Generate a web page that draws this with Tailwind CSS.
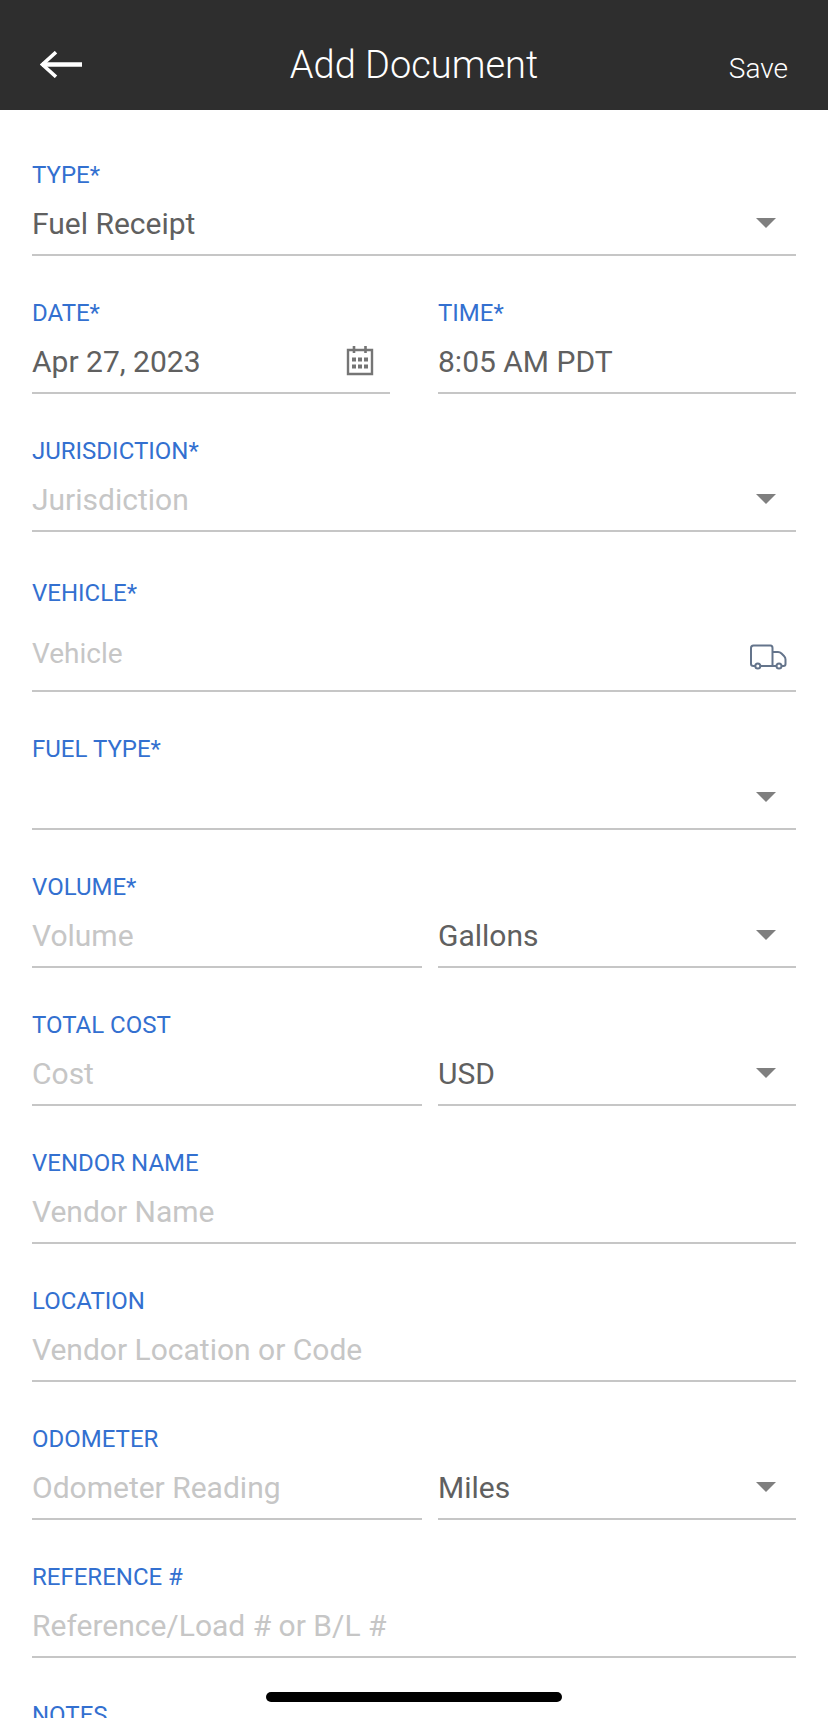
<!DOCTYPE html>
<html lang="en">
<head>
    <meta charset="utf-8">
    <meta name="viewport" content="width=device-width, initial-scale=1.0">
    <title>Add Document</title>
    <script src="https://cdn.jsdelivr.net/npm/@tailwindcss/browser@4"></script>
</head>
<body class="h-screen flex flex-col overflow-hidden bg-white font-['Roboto',sans-serif] text-[30px] text-[#606060]">
    <header class="grid grid-cols-[1fr_auto_1fr] items-baseline px-10 pt-[45px] pb-[21px] bg-[#2e2e2e] text-white font-light">
        <button type="button" aria-label="Back" class="justify-self-start">
            <svg class="block w-[42px] h-[27px]" viewBox="0 0 42 27" fill="none" stroke="currentColor">
                <path d="M2 13.5H42" stroke-width="4.4" />
                <path d="M16 1.2L2.4 13.5L16 25.8" stroke-width="3.6" />
            </svg>
        </button>
        <h1 class="text-[38px] leading-10">Add Document</h1>
        <button type="submit" form="document-form" class="justify-self-end text-[28px] leading-10">Save</button>
    </header>

    <main class="flex-1 min-h-0 overflow-y-auto [scrollbar-width:none]">
        <form id="document-form" class="flex flex-col gap-[42px] px-8 pt-[50px] pb-24">
            <div class="flex flex-col gap-0.5">
                <label for="type" class="text-2xl leading-[30px] text-[#3370d0]">TYPE*</label>
                <div class="relative flex items-center h-16 border-b-2 border-[#c6c6c6]">
                    <select id="type" class="w-full h-full appearance-none bg-transparent outline-none">
                        <option>Fuel Receipt</option>
                    </select>
                    <svg class="absolute right-5 w-5 h-2.5 pointer-events-none" viewBox="0 0 20 10" fill="#7f7f7f"><path d="M0 0H20L10 10Z" /></svg>
                </div>
            </div>

            <div class="grid grid-cols-2 gap-12">
                <div class="flex flex-col gap-0.5">
                    <label for="date" class="text-2xl leading-[30px] text-[#3370d0]">DATE*</label>
                    <div class="flex items-center h-16 pr-4 border-b-2 border-[#c6c6c6]">
                        <input id="date" type="text" value="Apr 27, 2023" class="flex-1 min-w-0 h-full outline-none">
                        <button type="button" aria-label="Pick a date">
                            <svg class="block w-7 h-[30px]" viewBox="0 0 28 30" fill="none" stroke="#757575">
                                <path d="M2 4H26V28H2Z" stroke-width="2.4" />
                                <path d="M8 0V7M19.5 0V7" stroke-width="2.6" />
                                <path d="M6 13.500H22M6 20.500H22" stroke-width="4" stroke-dasharray="4 2" />
                            </svg>
                        </button>
                    </div>
                </div>
                <div class="flex flex-col gap-0.5">
                    <label for="time" class="text-2xl leading-[30px] text-[#3370d0]">TIME*</label>
                    <div class="flex items-center h-16 border-b-2 border-[#c6c6c6]">
                        <input id="time" type="text" value="8:05 AM PDT" class="w-full h-full outline-none">
                    </div>
                </div>
            </div>

            <div class="flex flex-col gap-0.5">
                <label for="jurisdiction" class="text-2xl leading-[30px] text-[#3370d0]">JURISDICTION*</label>
                <div class="relative flex items-center h-16 border-b-2 border-[#c6c6c6]">
                    <select id="jurisdiction" class="w-full h-full appearance-none bg-transparent text-[#c6c6c6] outline-none">
                        <option value="">Jurisdiction</option>
                    </select>
                    <svg class="absolute right-5 w-5 h-2.5 pointer-events-none" viewBox="0 0 20 10" fill="#7f7f7f"><path d="M0 0H20L10 10Z" /></svg>
                </div>
            </div>

            <div class="flex flex-col gap-2 pt-1">
                <label for="vehicle" class="text-2xl leading-[30px] text-[#3370d0]">VEHICLE*</label>
                <div class="flex items-center h-[76px] pr-2 border-b-2 border-[#c6c6c6]">
                    <input id="vehicle" type="text" placeholder="Vehicle" class="flex-1 min-w-0 h-full text-[28px] placeholder:text-[#c6c6c6] outline-none">
                    <button type="button" aria-label="Choose a vehicle" class="pt-2">
                        <svg class="block w-[38px] h-[26px]" viewBox="0 0 38 26" fill="none" stroke="#64748b" stroke-width="2">
                            <path d="M5 22H3.5Q1 22 1 20V4Q1 1.500 3.500 1.500H20.500Q22.500 1.500 22.500 4V22H10.500M22.500 8H28Q30 8 31.500 9.500L34 12Q35.500 13.500 35.500 15.500V20Q35.500 22 33.500 22H31.500M26.500 22H22.500" />
                            <circle cx="7.800" cy="22" r="2.500" />
                            <circle cx="29" cy="22" r="2.500" />
                        </svg>
                    </button>
                </div>
            </div>

            <div class="flex flex-col gap-0.5">
                <label for="fuel-type" class="text-2xl leading-[30px] text-[#3370d0]">FUEL TYPE*</label>
                <div class="relative flex items-center h-16 border-b-2 border-[#c6c6c6]">
                    <select id="fuel-type" class="w-full h-full appearance-none bg-transparent outline-none">
                        <option value=""></option>
                    </select>
                    <svg class="absolute right-5 w-5 h-2.5 pointer-events-none" viewBox="0 0 20 10" fill="#7f7f7f"><path d="M0 0H20L10 10Z" /></svg>
                </div>
            </div>

            <div class="grid grid-cols-2 gap-12 items-end">
                <div class="flex flex-col gap-0.5 -mr-8">
                    <label for="volume" class="text-2xl leading-[30px] text-[#3370d0]">VOLUME*</label>
                    <div class="flex items-center h-16 border-b-2 border-[#c6c6c6]">
                        <input id="volume" type="text" placeholder="Volume" class="w-full h-full placeholder:text-[#c6c6c6] outline-none">
                    </div>
                </div>
                <div class="relative flex items-center h-16 border-b-2 border-[#c6c6c6]">
                    <select aria-label="Volume unit" class="w-full h-full appearance-none bg-transparent outline-none">
                        <option>Gallons</option>
                    </select>
                    <svg class="absolute right-5 w-5 h-2.5 pointer-events-none" viewBox="0 0 20 10" fill="#7f7f7f"><path d="M0 0H20L10 10Z" /></svg>
                </div>
            </div>

            <div class="grid grid-cols-2 gap-12 items-end">
                <div class="flex flex-col gap-0.5 -mr-8">
                    <label for="cost" class="text-2xl leading-[30px] text-[#3370d0]">TOTAL COST</label>
                    <div class="flex items-center h-16 border-b-2 border-[#c6c6c6]">
                        <input id="cost" type="text" placeholder="Cost" class="w-full h-full placeholder:text-[#c6c6c6] outline-none">
                    </div>
                </div>
                <div class="relative flex items-center h-16 border-b-2 border-[#c6c6c6]">
                    <select aria-label="Currency" class="w-full h-full appearance-none bg-transparent outline-none">
                        <option>USD</option>
                    </select>
                    <svg class="absolute right-5 w-5 h-2.5 pointer-events-none" viewBox="0 0 20 10" fill="#7f7f7f"><path d="M0 0H20L10 10Z" /></svg>
                </div>
            </div>

            <div class="flex flex-col gap-0.5">
                <label for="vendor" class="text-2xl leading-[30px] text-[#3370d0]">VENDOR NAME</label>
                <div class="flex items-center h-16 border-b-2 border-[#c6c6c6]">
                    <input id="vendor" type="text" placeholder="Vendor Name" class="w-full h-full placeholder:text-[#c6c6c6] outline-none">
                </div>
            </div>

            <div class="flex flex-col gap-0.5">
                <label for="location" class="text-2xl leading-[30px] text-[#3370d0]">LOCATION</label>
                <div class="flex items-center h-16 border-b-2 border-[#c6c6c6]">
                    <input id="location" type="text" placeholder="Vendor Location or Code" class="w-full h-full placeholder:text-[#c6c6c6] outline-none">
                </div>
            </div>

            <div class="grid grid-cols-2 gap-12 items-end">
                <div class="flex flex-col gap-0.5 -mr-8">
                    <label for="odometer" class="text-2xl leading-[30px] text-[#3370d0]">ODOMETER</label>
                    <div class="flex items-center h-16 border-b-2 border-[#c6c6c6]">
                        <input id="odometer" type="text" placeholder="Odometer Reading" class="w-full h-full placeholder:text-[#c6c6c6] outline-none">
                    </div>
                </div>
                <div class="relative flex items-center h-16 border-b-2 border-[#c6c6c6]">
                    <select aria-label="Distance unit" class="w-full h-full appearance-none bg-transparent outline-none">
                        <option>Miles</option>
                    </select>
                    <svg class="absolute right-5 w-5 h-2.5 pointer-events-none" viewBox="0 0 20 10" fill="#7f7f7f"><path d="M0 0H20L10 10Z" /></svg>
                </div>
            </div>

            <div class="flex flex-col gap-0.5">
                <label for="reference" class="text-2xl leading-[30px] text-[#3370d0]">REFERENCE #</label>
                <div class="flex items-center h-16 border-b-2 border-[#c6c6c6]">
                    <input id="reference" type="text" placeholder="Reference/Load # or B/L #" class="w-full h-full placeholder:text-[#c6c6c6] outline-none">
                </div>
            </div>

            <div class="flex flex-col gap-0.5">
                <label for="notes" class="text-2xl leading-[30px] text-[#3370d0]">NOTES</label>
                <div class="flex items-center h-16 border-b-2 border-[#c6c6c6]">
                    <input id="notes" type="text" class="w-full h-full outline-none">
                </div>
            </div>
        </form>
    </main>

    <!-- home indicator -->
    <div class="fixed bottom-4 left-1/2 -translate-x-1/2 w-[296px] h-2.5 rounded-full bg-black"></div>
</body>
</html>
